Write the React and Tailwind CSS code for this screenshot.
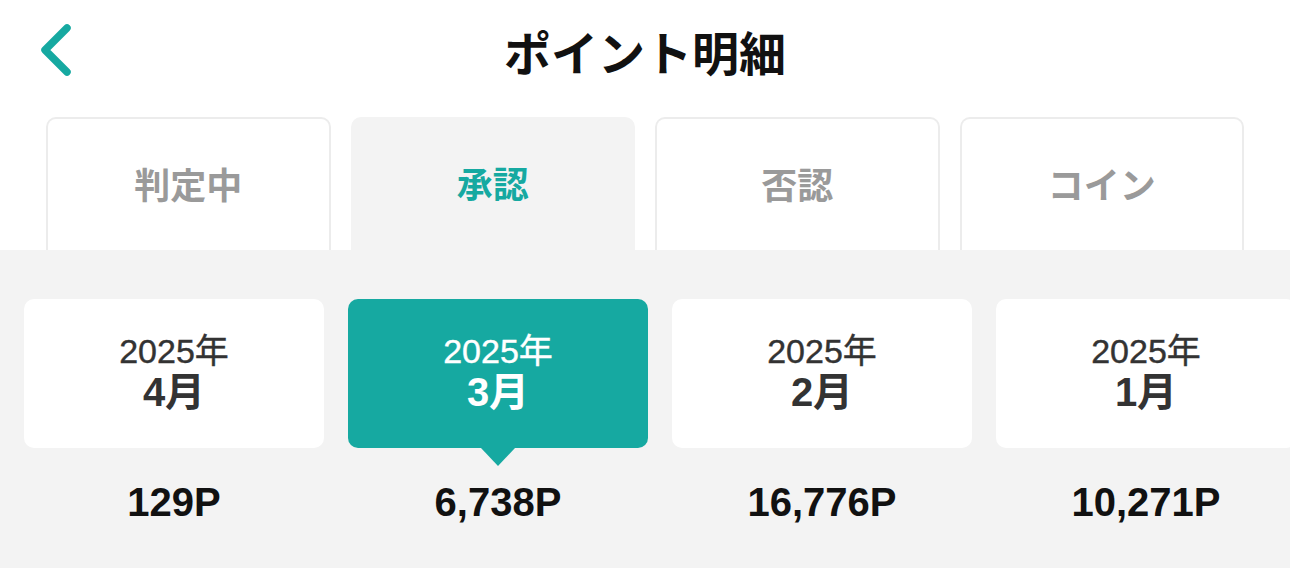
import { useState } from 'react'

const tabs = ['判定中', '承認', '否認', 'コイン']

const months = [
  { year: '2025年', month: '4月', points: '129P' },
  { year: '2025年', month: '3月', points: '6,738P' },
  { year: '2025年', month: '2月', points: '16,776P' },
  { year: '2025年', month: '1月', points: '10,271P' },
]

const numFont = { fontFamily: '"Liberation Sans", "Noto Sans CJK JP", sans-serif' }

function BackIcon() {
  return (
    <svg width="48" height="64" viewBox="0 0 48 64" fill="none">
      <path
        d="M35 10 L13 32 L35 54"
        stroke="#16a9a1"
        strokeWidth="7.5"
        strokeLinecap="round"
        strokeLinejoin="round"
      />
    </svg>
  )
}

function App() {
  const [activeTab, setActiveTab] = useState(1)
  const [activeMonth, setActiveMonth] = useState(1)

  return (
    <div
      className="w-[1290px] h-[588px] bg-white overflow-hidden"
      style={{ fontFamily: '"Noto Sans CJK JP", "Noto Sans", sans-serif' }}
    >
      {/* ヘッダー */}
      <div className="relative h-[100px] flex items-center justify-center">
        <button className="absolute left-[32px] top-[18px]">
          <BackIcon />
        </button>
        <h1 className="text-[47px] font-bold text-[#111] leading-none">ポイント明細</h1>
      </div>

      {/* タブ */}
      <div className="flex gap-[20px] px-[46px] pt-[17px]">
        {tabs.map((tab, i) => (
          <button
            key={tab}
            onClick={() => setActiveTab(i)}
            className={
              i === activeTab
                ? 'w-[285px] h-[133px] rounded-t-[10px] bg-[#f3f3f3] text-[#16a9a1] text-[36px] font-bold leading-none pb-[4px]'
                : 'w-[285px] h-[133px] rounded-t-[10px] bg-white border-2 border-b-0 border-[#ececec] text-[#9a9a9a] text-[36px] font-bold leading-none pb-[4px]'
            }
          >
            {tab}
          </button>
        ))}
      </div>

      {/* 月別ポイント */}
      <div className="bg-[#f3f3f3] h-[318px] pt-[49px] pl-[24px] overflow-hidden">
        <div className="flex gap-[24px]">
          {months.map((m, i) => (
            <div key={m.month} className="w-[300px] shrink-0 flex flex-col">
              <button
                onClick={() => setActiveMonth(i)}
                style={numFont}
                className={
                  i === activeMonth
                    ? 'relative h-[149px] rounded-[10px] bg-[#16a9a1] text-white flex flex-col items-center justify-center'
                    : 'relative h-[149px] rounded-[10px] bg-white text-[#333] flex flex-col items-center justify-center'
                }
              >
                <span className="text-[34px] leading-[36px] [-webkit-text-stroke:0.4px_currentColor]">{m.year}</span>
                <span className="text-[40px] font-bold leading-[46px]">{m.month}</span>
                {i === activeMonth && (
                  <span className="absolute left-1/2 -translate-x-1/2 top-full w-0 h-0 border-l-[17px] border-r-[17px] border-t-[18px] border-l-transparent border-r-transparent border-t-[#16a9a1]" />
                )}
              </button>
              <div
                style={numFont}
                className="h-[108px] flex items-center justify-center text-[40px] font-bold text-[#111]"
              >
                {m.points}
              </div>
            </div>
          ))}
        </div>
      </div>
    </div>
  )
}

export default App
